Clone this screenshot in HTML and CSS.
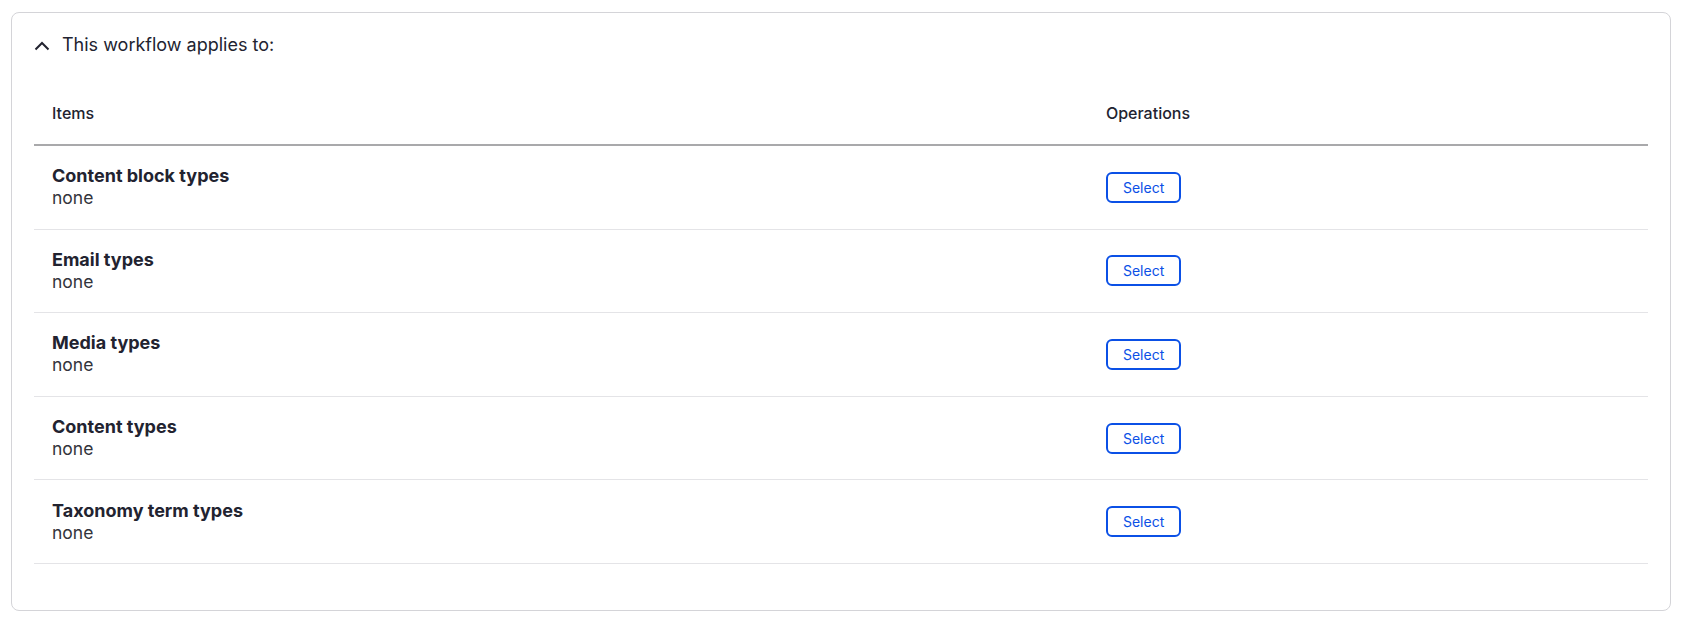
FILE: index.html
```html
<!DOCTYPE html>
<html lang="en">
<head>
<meta charset="UTF-8">
<title>Workflow</title>
<link rel="stylesheet" href="styles.css">
</head>
<body>
<div class="card">
    <div class="card-title">
        <svg class="chevron" width="16" height="10" viewBox="0 0 16 10">
            <path d="M1.5 8.5 L8 2 L14.5 8.5" fill="none" stroke="#222330" stroke-width="2"/>
        </svg>
        <span>This workflow applies to:</span>
    </div>
    <table class="items">
        <thead>
            <tr>
                <th class="col-items">Items</th>
                <th>Operations</th>
            </tr>
        </thead>
        <tbody>
            <tr>
                <td><div class="name">Content block types</div><div class="value">none</div></td>
                <td><button class="select-btn">Select</button></td>
            </tr>
            <tr>
                <td><div class="name">Email types</div><div class="value">none</div></td>
                <td><button class="select-btn">Select</button></td>
            </tr>
            <tr>
                <td><div class="name">Media types</div><div class="value">none</div></td>
                <td><button class="select-btn">Select</button></td>
            </tr>
            <tr>
                <td><div class="name">Content types</div><div class="value">none</div></td>
                <td><button class="select-btn">Select</button></td>
            </tr>
            <tr>
                <td><div class="name">Taxonomy term types</div><div class="value">none</div></td>
                <td><button class="select-btn">Select</button></td>
            </tr>
        </tbody>
    </table>
</div>
</body>
</html>
```

FILE: styles.css
```css
body, html {
    margin: 0;
    padding: 0;
    font-family: Inter, "Noto Sans", sans-serif;
    color: #222330;
    background: #fff;
}
.card {
    margin: 12px 11px 11px 11px;
    border: 1px solid #d4d4d8;
    border-radius: 8px;
    padding: 20px 22px 46px 22px;
}
.card-title {
    display: flex;
    align-items: center;
    gap: 12px;
    font-size: 18px;
    line-height: 24px;
}
.chevron {
    display: block;
    margin-top: 1px;
}
.items {
    width: 100%;
    border-collapse: collapse;
    margin-top: 25px;
}
.items th {
    text-align: left;
    font-size: 16px;
    font-weight: 500;
    line-height: 24px;
    padding: 19px 18px 19px 18px;
    border-bottom: 2px solid #a9a9ab;
}
.items th.col-items {
    width: 65.3%;
}
.items td {
    padding: 19.3px 18px;
    border-bottom: 1px solid #e4e4e7;
    vertical-align: middle;
}
.name {
    font-size: 18px;
    font-weight: 700;
    line-height: 22px;
}
.value {
    font-size: 17.5px;
    line-height: 22px;
    color: #33343c;
}
.select-btn {
    font-family: Inter, "Noto Sans", sans-serif;
    font-size: 14px;
    font-weight: 400;
    color: #0b50e6;
    background: #fff;
    border: 2px solid #0b50e6;
    border-radius: 6px;
    height: 31px;
    padding: 0 15px;
    cursor: pointer;
}
```
